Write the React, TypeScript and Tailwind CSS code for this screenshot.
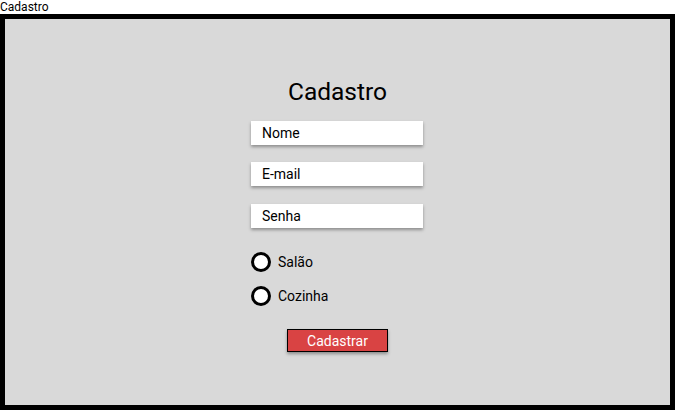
export default function App() {
  return (
    <div className="h-[410px] w-[675px] overflow-hidden bg-white font-['Roboto',sans-serif]">
      <div className="h-[14px] text-[12px] leading-[14px] text-black">Cadastro</div>
      <div className="flex h-[396px] w-[675px] flex-col items-center border-[5px] border-black bg-[#d9d9d9]">
        <h1 className="mt-[59px] text-[24.5px] leading-[28px] text-black">Cadastro</h1>
        <div className="mr-[1px] mt-[15px] flex w-[172px] flex-col">
          {["Nome", "E-mail", "Senha"].map((p, i) => (
            <div
              key={p}
              className={`flex h-[24px] items-center bg-white pl-[11px] text-[14px] text-black shadow-[0_2px_3px_rgba(0,0,0,0.35)] ${i === 0 ? "" : i === 1 ? "mt-[17px]" : "mt-[18px]"}`}
            >
              {p}
            </div>
          ))}
          <div className="mt-[24px] flex flex-col gap-[14px]">
            {["Salão", "Cozinha"].map((r) => (
              <div key={r} className="flex h-[20px] items-center gap-[7px]">
                <span className="h-[20px] w-[20px] rounded-full border-[3px] border-black bg-white" />
                <span className="text-[14px] text-black">{r}</span>
              </div>
            ))}
          </div>
        </div>
        <button className="mt-[23px] h-[23px] w-[101px] border border-black bg-[#d94343] text-[14px] leading-[20px] text-white shadow-[0_2px_3px_rgba(0,0,0,0.35)]">
          Cadastrar
        </button>
      </div>
    </div>
  );
}
